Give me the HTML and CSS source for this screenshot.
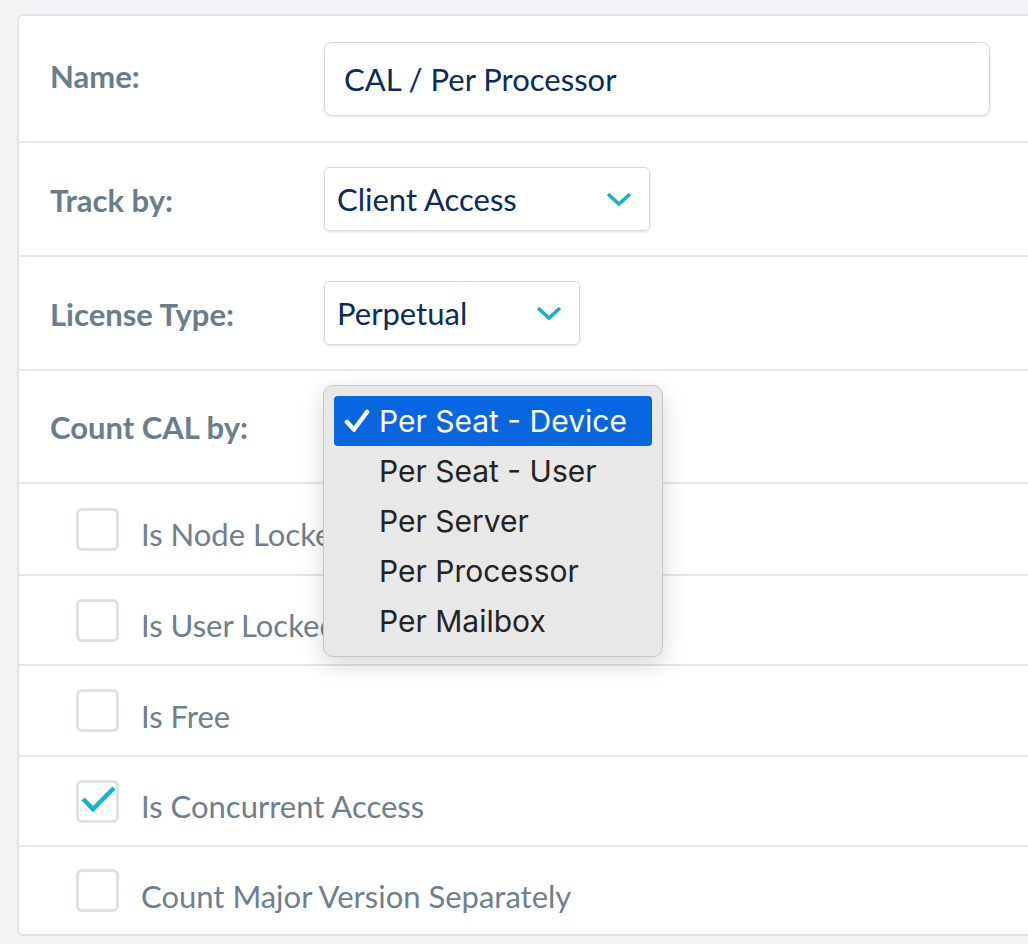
FILE: index.html
```html
<!DOCTYPE html>
<html>
<head>
<meta charset="utf-8">
<link rel="stylesheet" href="styles.css">
</head>
<body>
<div class="page">
  <div class="card">
    <div class="row field r1">
      <div class="lbl">Name:</div>
      <div class="input">CAL / Per Processor</div>
    </div>
    <div class="row field r2">
      <div class="lbl">Track by:</div>
      <div class="select sel-track">
        <span>Client Access</span>
        <svg class="chev" width="26" height="15" viewBox="0 0 26 15"><path d="M2 2 L13 12 L24 2" fill="none" stroke="#16b3c5" stroke-width="3.6"/></svg>
      </div>
    </div>
    <div class="row field r3">
      <div class="lbl">License Type:</div>
      <div class="select sel-type">
        <span>Perpetual</span>
        <svg class="chev" width="26" height="15" viewBox="0 0 26 15"><path d="M2 2 L13 12 L24 2" fill="none" stroke="#16b3c5" stroke-width="3.6"/></svg>
      </div>
    </div>
    <div class="row field r4">
      <div class="lbl">Count CAL by:</div>
      <div class="anchor">
        <div class="menu">
          <div class="opt sel"><svg class="tick" width="26" height="24" viewBox="0 0 26 24"><path d="M3 13 L10 20.5 L23 3" fill="none" stroke="#fff" stroke-width="4.5" stroke-linecap="round" stroke-linejoin="round"/></svg>Per Seat - Device</div>
          <div class="opt">Per Seat - User</div>
          <div class="opt">Per Server</div>
          <div class="opt">Per Processor</div>
          <div class="opt">Per Mailbox</div>
        </div>
      </div>
    </div>
    <div class="row check c1">
      <span class="box"></span><span class="clbl">Is Node Locked</span>
    </div>
    <div class="row check c2">
      <span class="box"></span><span class="clbl">Is User Locked</span>
    </div>
    <div class="row check c3">
      <span class="box"></span><span class="clbl">Is Free</span>
    </div>
    <div class="row check c4">
      <span class="box checked"><svg class="mark" width="40" height="34" viewBox="0 0 40 34"><path d="M4 16 L14 26 L35 5" fill="none" stroke="#16b3c5" stroke-width="4.5"/></svg></span><span class="clbl">Is Concurrent Access</span>
    </div>
    <div class="row check c5">
      <span class="box"></span><span class="clbl">Count Major Version Separately</span>
    </div>
  </div>
</div>
</body>
</html>
```
FILE: styles.css
```css
html, body {
  margin: 0;
  padding: 0;
  background: #f2f3f5;
  overflow: hidden;
}
.page {
  width: 1028px;
  height: 944px;
  padding: 14px 0 0 17px;
  box-sizing: border-box;
  overflow: hidden;
}
.card {
  position: relative;
  width: 1030px;
  background: #fff;
  border: 2px solid #e1e3e6;
  border-right: none;
  border-radius: 6px 0 0 6px;
  box-sizing: border-box;
  font-family: "Lato", "Liberation Sans", sans-serif;
}
.row {
  display: flex;
  align-items: center;
  border-bottom: 2px solid #e3e6ea;
  box-sizing: border-box;
}
.row:last-child { border-bottom: none; }
.field { padding-left: 31px; }
.r1 { height: 127px; }
.r2 { height: 114px; }
.r3 { height: 114px; }
.r4 { height: 113px; }
.c1 { height: 92px; }
.c2 { height: 90px; }
.c3 { height: 91px; }
.c4 { height: 90px; }
.c5 { height: 87px; }
.lbl {
  width: 274px;
  font-size: 31px;
  font-weight: 700;
  color: #6a7d8a;
  padding-top: 1px;
}
.r1 .lbl { padding-bottom: 6px; padding-top: 0; }
.input {
  width: 666px;
  height: 74px;
  box-sizing: border-box;
  border: 1px solid #d6d9dd;
  border-radius: 8px;
  box-shadow: 0 1px 3px rgba(0,0,0,0.12);
  display: flex;
  align-items: center;
  padding-left: 19px;
  font-size: 31px;
  color: #0c2a5b;
}
.select {
  height: 64px;
  box-sizing: border-box;
  border: 1px solid #d6d9dd;
  border-radius: 5px;
  box-shadow: 0 1px 3px rgba(0,0,0,0.12);
  display: flex;
  align-items: center;
  justify-content: space-between;
  padding: 0 17px 0 12px;
  font-size: 31px;
  color: #0c2a5b;
}
.sel-track { width: 326px; }
.sel-type { width: 256px; }
.anchor {
  position: relative;
  width: 256px;
  height: 64px;
}
.menu {
  position: absolute;
  left: -1px;
  top: -10px;
  width: 340px;
  height: 272px;
  box-sizing: border-box;
  background: #e8e8e8;
  border: 1px solid #c6c6c6;
  border-radius: 10px;
  box-shadow: 0 8px 24px rgba(0,0,0,0.16);
  padding: 10px 10px;
  font-family: "Inter", "Noto Sans", sans-serif;
  font-size: 30px;
  color: #232323;
  z-index: 5;
}
.opt {
  height: 50px;
  display: flex;
  align-items: center;
  padding-left: 45px;
  border-radius: 4px;
}
.opt.sel {
  background: #0866e0;
  color: #fff;
  padding-left: 10px;
}
.tick {
  margin-right: 9px;
  flex: none;
}
.check { padding-left: 57px; }
.box {
  position: relative;
  width: 43px;
  height: 43px;
  box-sizing: border-box;
  border: 3px solid #dde1e6;
  border-radius: 6px;
  margin-right: 22px;
  flex: none;
}
.mark {
  position: absolute;
  left: 0;
  top: 0;
}
.clbl {
  font-size: 31px;
  color: #6e808d;
  padding-top: 10px;
}
```
